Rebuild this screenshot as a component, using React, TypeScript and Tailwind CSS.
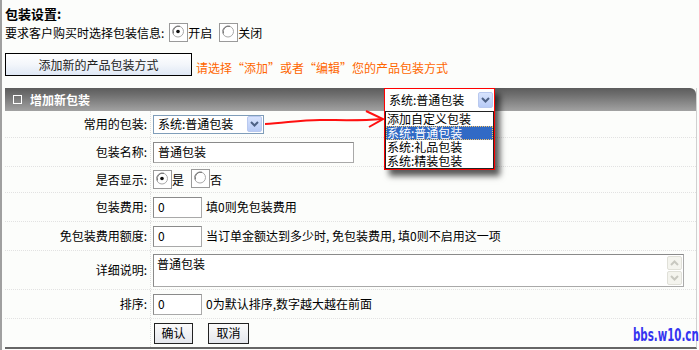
import React from "react";

function Radio({ checked }: { checked?: boolean }) {
  return (
    <span className="inline-flex w-[19px] h-[19px] border border-[#9a9a9a] bg-white items-start justify-start">
      <svg width="17" height="17" viewBox="0 0 17 17">
        <circle cx="8" cy="7.5" r="5.5" fill="#fff" stroke="#a8a8a8" strokeWidth="1" />
        <path d="M3.5 9.5 A5.5 5.5 0 0 1 10 2.3" fill="none" stroke="#6f6f6f" strokeWidth="1" />
        {checked && <circle cx="8" cy="7.5" r="1.8" fill="#111" />}
      </svg>
    </span>
  );
}

function Chevron({ color = "#4d6185" }: { color?: string }) {
  return (
    <svg width="9" height="6" viewBox="0 0 9 6">
      <path d="M1 1 L4.5 4.5 L8 1" fill="none" stroke={color} strokeWidth="2" />
    </svg>
  );
}

function ArrowBtn({ className = "" }: { className?: string }) {
  return (
    <span
      className={
        "flex items-center justify-center w-[15px] h-[16px] rounded-[2px] border border-[#b9c9ef] bg-[linear-gradient(#d7e3fd,#b8cbf6)] " +
        className
      }
    >
      <Chevron />
    </span>
  );
}

function TextInput({ value, w }: { value: string; w: string }) {
  return (
    <div
      className={
        "h-[21px] border border-[#a9a9a9] border-t-[#8a8a8a] border-l-[#8a8a8a] bg-white flex items-center pl-[4px] text-[12px] text-black " +
        w
      }
    >
      {value}
    </div>
  );
}

function Row({
  label,
  h,
  children,
  last,
}: {
  label: string;
  h: string;
  children?: React.ReactNode;
  last?: boolean;
}) {
  return (
    <div
      className={
        "grid grid-cols-[146px_1fr] " +
        h +
        (last ? "" : " border-b border-dotted border-[#e2e2e2]")
      }
    >
      <div className="flex items-center justify-end pr-[3px] border-r border-dotted border-[#dedede] text-[12px] text-black">
        {label}
      </div>
      <div className="flex items-center pl-[2px] gap-[3px] text-[12px] text-black">
        {children}
      </div>
    </div>
  );
}

export default function App() {
  return (
    <div className="relative w-[699px] h-[350px] overflow-hidden bg-[#fcfdfb] border-l-2 border-[#a0a0a0] font-['Noto_Sans_CJK_SC','Noto_Sans',sans-serif] text-[12px] leading-[16px] text-black">
      {/* top settings */}
      <div className="pl-[3px] pt-[6px]">
        <div className="font-bold text-[13px] leading-[16px]">包装设置:</div>
        <div className="mt-[1px] flex items-center h-[20px]">
          <span>要求客户购买时选择包装信息:</span>
          <span className="ml-[5px]">
            <Radio checked />
          </span>
          <span>开启</span>
          <span className="ml-[7px]">
            <Radio />
          </span>
          <span>关闭</span>
        </div>
        <div className="mt-[10px] flex items-start">
          <div className="w-[187px] h-[23px] border border-black bg-[linear-gradient(#ffffff,#f3f6fb_50%,#dfe8f5)] flex items-center justify-center text-[12px] text-[#222]">
            添加新的产品包装方式
          </div>
          <div className="ml-[4px] mt-[7px] text-[#ff6600] text-[12px] leading-[16px]">
            请选择“添加”或者“编辑”您的产品包装方式
          </div>
        </div>
      </div>

      {/* panel */}
      <div className="ml-[3px] mt-[12px] w-[692px] border-r border-[#d0d0d0] border-b-2 border-b-[#666]">
        <div className="h-[23px] rounded-tr-[6px] bg-[linear-gradient(#5c5c5c,#6f6f6f_30%,#858585_60%,#a2a2a2)] flex items-center pl-[8px] text-white font-bold text-[12px]">
          <span className="inline-block w-[9px] h-[9px] border-[1.5px] border-white mr-[8px]" />
          增加新包装
        </div>

        <Row label="常用的包装:" h="h-[27px]">
          <div className="w-[111px] h-[19px] border border-[#7f9db9] bg-white flex items-center justify-between pl-[4px] pr-[1px]">
            <span>系统:普通包装</span>
            <ArrowBtn />
          </div>
        </Row>
        <Row label="包装名称:" h="h-[29px]">
          <TextInput value="普通包装" w="w-[201px]" />
        </Row>
        <Row label="是否显示:" h="h-[26px]">
          <Radio checked />
          <span className="-ml-[3px]">是</span>
          <span className="ml-[4px]">
            <Radio />
          </span>
          <span className="-ml-[3px]">否</span>
        </Row>
        <Row label="包装费用:" h="h-[29px]">
          <TextInput value="0" w="w-[49px]" />
          <span className="ml-[1px]">填0则免包装费用</span>
        </Row>
        <Row label="免包装费用额度:" h="h-[29px]">
          <TextInput value="0" w="w-[49px]" />
          <span className="ml-[1px]">当订单金额达到多少时, 免包装费用, 填0则不启用这一项</span>
        </Row>
        <Row label="详细说明:" h="h-[39px]">
          <div className="w-[531px] h-[33px] border border-[#a9a9a9] border-t-[#8a8a8a] border-l-[#8a8a8a] bg-white flex justify-between">
            <span className="pl-[3px] pt-[1px]">普通包装</span>
            <div className="w-[16px] flex flex-col gap-[1px] pt-[1px] pr-[1px]">
              <span className="h-[14px] border border-[#e0e0d8] bg-[#f4f4ee] flex items-center justify-center rounded-[2px]">
                <svg width="9" height="6" viewBox="0 0 9 6">
                  <path d="M1 5 L4.5 1.5 L8 5" fill="none" stroke="#c8c8c0" strokeWidth="2" />
                </svg>
              </span>
              <span className="h-[14px] border border-[#e0e0d8] bg-[#f4f4ee] flex items-center justify-center rounded-[2px]">
                <Chevron color="#c8c8c0" />
              </span>
            </div>
          </div>
        </Row>
        <Row label="排序:" h="h-[29px]">
          <TextInput value="0" w="w-[49px]" />
          <span className="ml-[1px]">0为默认排序,数字越大越在前面</span>
        </Row>
        <Row label="" h="h-[28px]" last>
          <div className="ml-[1px] w-[39px] h-[21px] border border-[#222] bg-[linear-gradient(#fbfbfb,#e4e6ec)] flex items-center justify-center">
            确认
          </div>
          <div className="ml-[12px] w-[41px] h-[21px] border border-[#222] bg-[linear-gradient(#fbfbfb,#e4e6ec)] flex items-center justify-center">
            取消
          </div>
        </Row>
      </div>

      {/* watermark */}
      <div className="absolute left-[631px] top-[325px] text-[#3434f0] font-bold text-[18px] leading-[20px] font-['DejaVu_Sans',sans-serif] origin-left scale-x-[0.57] whitespace-nowrap">
        bbs.w10.cn
      </div>

      {/* red arrow */}
      <svg className="absolute left-[-2px] top-0 pointer-events-none" width="699" height="350">
        <path
          d="M265 124 C 285 123, 300 120, 320 120 S 360 121, 382 119"
          fill="none"
          stroke="#ff1010"
          strokeWidth="2"
        />
        <path d="M366 111 L383 119 L369 127" fill="none" stroke="#ff1010" strokeWidth="2" />
      </svg>

      {/* dropdown overlay */}
      <div className="absolute left-[382px] top-[88px] w-[111px] h-[82px] border border-[#ff0000] bg-white shadow-[5px_6px_6px_rgba(0,0,0,0.65)] flex flex-col">
        <div className="h-[22px] flex items-center justify-between pl-[4px] pr-[1px]">
          <span>系统:普通包装</span>
          <ArrowBtn />
        </div>
        <div className="flex-1 border border-[#222] text-[12px]">
          <div className="h-[14px] leading-[14px] pl-[1px]">添加自定义包装</div>
          <div className="h-[14px] leading-[14px] pl-[1px] bg-[#316ac5] text-white outline-1 outline-dotted outline-[#f5c46a] -outline-offset-1">
            系统:普通包装
          </div>
          <div className="h-[14px] leading-[14px] pl-[1px]">系统:礼品包装</div>
          <div className="h-[14px] leading-[14px] pl-[1px]">系统:精装包装</div>
        </div>
      </div>
    </div>
  );
}
